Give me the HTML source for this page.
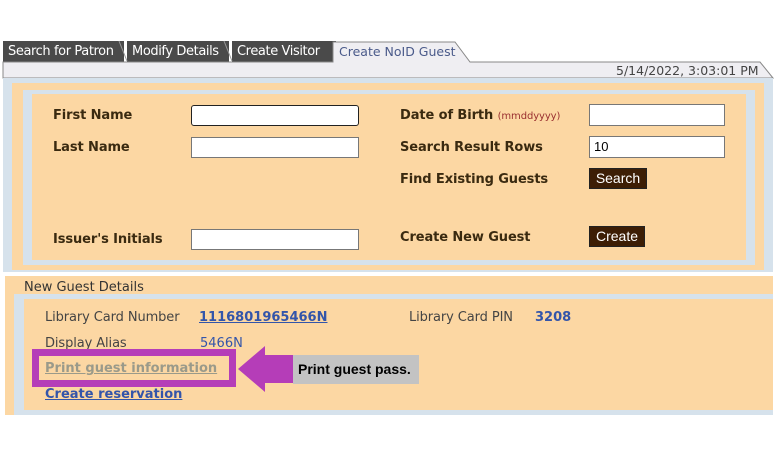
<!DOCTYPE html><html><head><style>
body{margin:0;width:775px;height:458px;background:#fff;font-family:"DejaVu Sans",Verdana,sans-serif;position:relative;overflow:hidden}
.a{position:absolute}
.tab{position:absolute;top:41px;height:21px;background:#4a4a4a;color:#fff;font-size:13px;line-height:21px;padding-left:5px;font-family:"DejaVu Sans",sans-serif;letter-spacing:-0.4px}
.lb{position:absolute;font-weight:bold;font-size:13px;color:#3a2a10;letter-spacing:-0.1px}
.in{position:absolute;height:18px;background:#fff;border:1px solid #777;box-sizing:border-box;font:13px "Liberation Sans",sans-serif;padding-left:4px;line-height:18px}
.bt{position:absolute;background:#3d1e05;color:#fff;border:1px solid #222;font:14px "Liberation Sans",sans-serif;text-align:center;line-height:19px;height:21px;box-sizing:border-box}
.t{position:absolute;font-size:13px;color:#444;letter-spacing:-0.1px}
.lk{position:absolute;font-size:13px;font-weight:bold;color:#3355aa;text-decoration:underline}
</style></head><body>
<div class="tab" style="left:3px;width:116px">Search for Patron</div>
<div class="tab" style="left:127px;width:97px">Modify Details</div>
<div class="tab" style="left:232px;width:99px">Create Visitor</div>
<svg class="a" style="left:0;top:38px" width="775" height="42"><path d="M333 4 H455 L470 24 H760 L773 40 H3 V24 H333 Z" fill="#efeef2" stroke="#888"/><path d="M119 3 l8 20 M224 3 l8 20" stroke="#999"/></svg>
<div class="a" style="left:339px;top:44px;font-size:12.5px;color:#4a5a8a">Create NoID Guest</div>
<div class="a" style="left:616px;top:63px;font-size:12.5px;color:#444">5/14/2022, 3:03:01 PM</div>
<div class="a" style="left:3px;top:78px;width:770px;height:194px;background:#d6e2ec"></div>
<div class="a" style="left:12px;top:83px;width:752px;height:187px;background:#fcd7a3"></div>
<div class="a" style="left:23px;top:90px;width:732px;height:175px;background:#d6e2ec"></div>
<div class="a" style="left:32px;top:94px;width:714px;height:166px;background:#fcd7a3"></div>
<div class="lb" style="left:53px;top:108px">First Name</div>
<div class="lb" style="left:53px;top:140px">Last Name</div>
<div class="lb" style="left:53px;top:232px">Issuer's Initials</div>
<div class="in" style="left:191px;top:105px;width:168px;height:21px;border:1px solid #222;border-radius:3px"></div>
<div class="in" style="left:191px;top:137px;width:168px;height:21px"></div>
<div class="in" style="left:191px;top:229px;width:168px;height:21px"></div>
<div class="lb" style="left:400px;top:108px">Date of Birth <span style="font-weight:normal;font-size:10px;color:#9a3030">(mmddyyyy)</span></div>
<div class="lb" style="left:400px;top:140px">Search Result Rows</div>
<div class="lb" style="left:400px;top:172px">Find Existing Guests</div>
<div class="lb" style="left:400px;top:230px">Create New Guest</div>
<div class="in" style="left:589px;top:104px;width:136px;height:22px"></div>
<div class="in" style="left:589px;top:136px;width:136px;height:22px;line-height:20px">10</div>
<div class="bt" style="left:589px;top:168px;width:58px">Search</div>
<div class="bt" style="left:589px;top:226px;width:56px">Create</div>
<div class="a" style="left:5px;top:276px;width:768px;height:139px;background:#fcd7a3"></div>
<div class="a" style="left:24px;top:280px;font-size:13px;color:#333">New Guest Details</div>
<div class="a" style="left:14px;top:294px;width:759px;height:121px;background:#d6e2ec"></div>
<div class="a" style="left:24px;top:299px;width:749px;height:111px;background:#fcd7a3"></div>
<div class="t" style="left:45px;top:310px">Library Card Number</div>
<div class="lk" style="left:199px;top:310px">1116801965466N</div>
<div class="t" style="left:409px;top:310px">Library Card PIN</div>
<div class="a" style="left:535px;top:310px;font-size:13px;font-weight:bold;color:#3355aa">3208</div>
<div class="t" style="left:45px;top:336px">Display Alias</div>
<div class="a" style="left:200px;top:336px;font-size:13px;color:#3355aa">5466N</div>
<div class="a" style="left:32px;top:349px;width:204px;height:38px;background:#b53db8"></div>
<div class="a" style="left:39px;top:356px;width:190px;height:24px;background:#fcd7a3"></div>
<div class="lk" style="left:45px;top:361px;color:#9a9a8a">Print guest information</div>
<svg class="a" style="left:237px;top:345px" width="60" height="48"><path d="M1 24 L28 1 V10 H58 V38 H28 V47 Z" fill="#b53db8"/></svg>
<div class="a" style="left:293px;top:355px;width:126px;height:29px;background:#c3c3c3;font:bold 14px 'Liberation Sans',sans-serif;line-height:29px;padding-left:5px;box-sizing:border-box;color:#000">Print guest pass.</div>
<div class="lk" style="left:45px;top:387px">Create reservation</div>
</body></html>
